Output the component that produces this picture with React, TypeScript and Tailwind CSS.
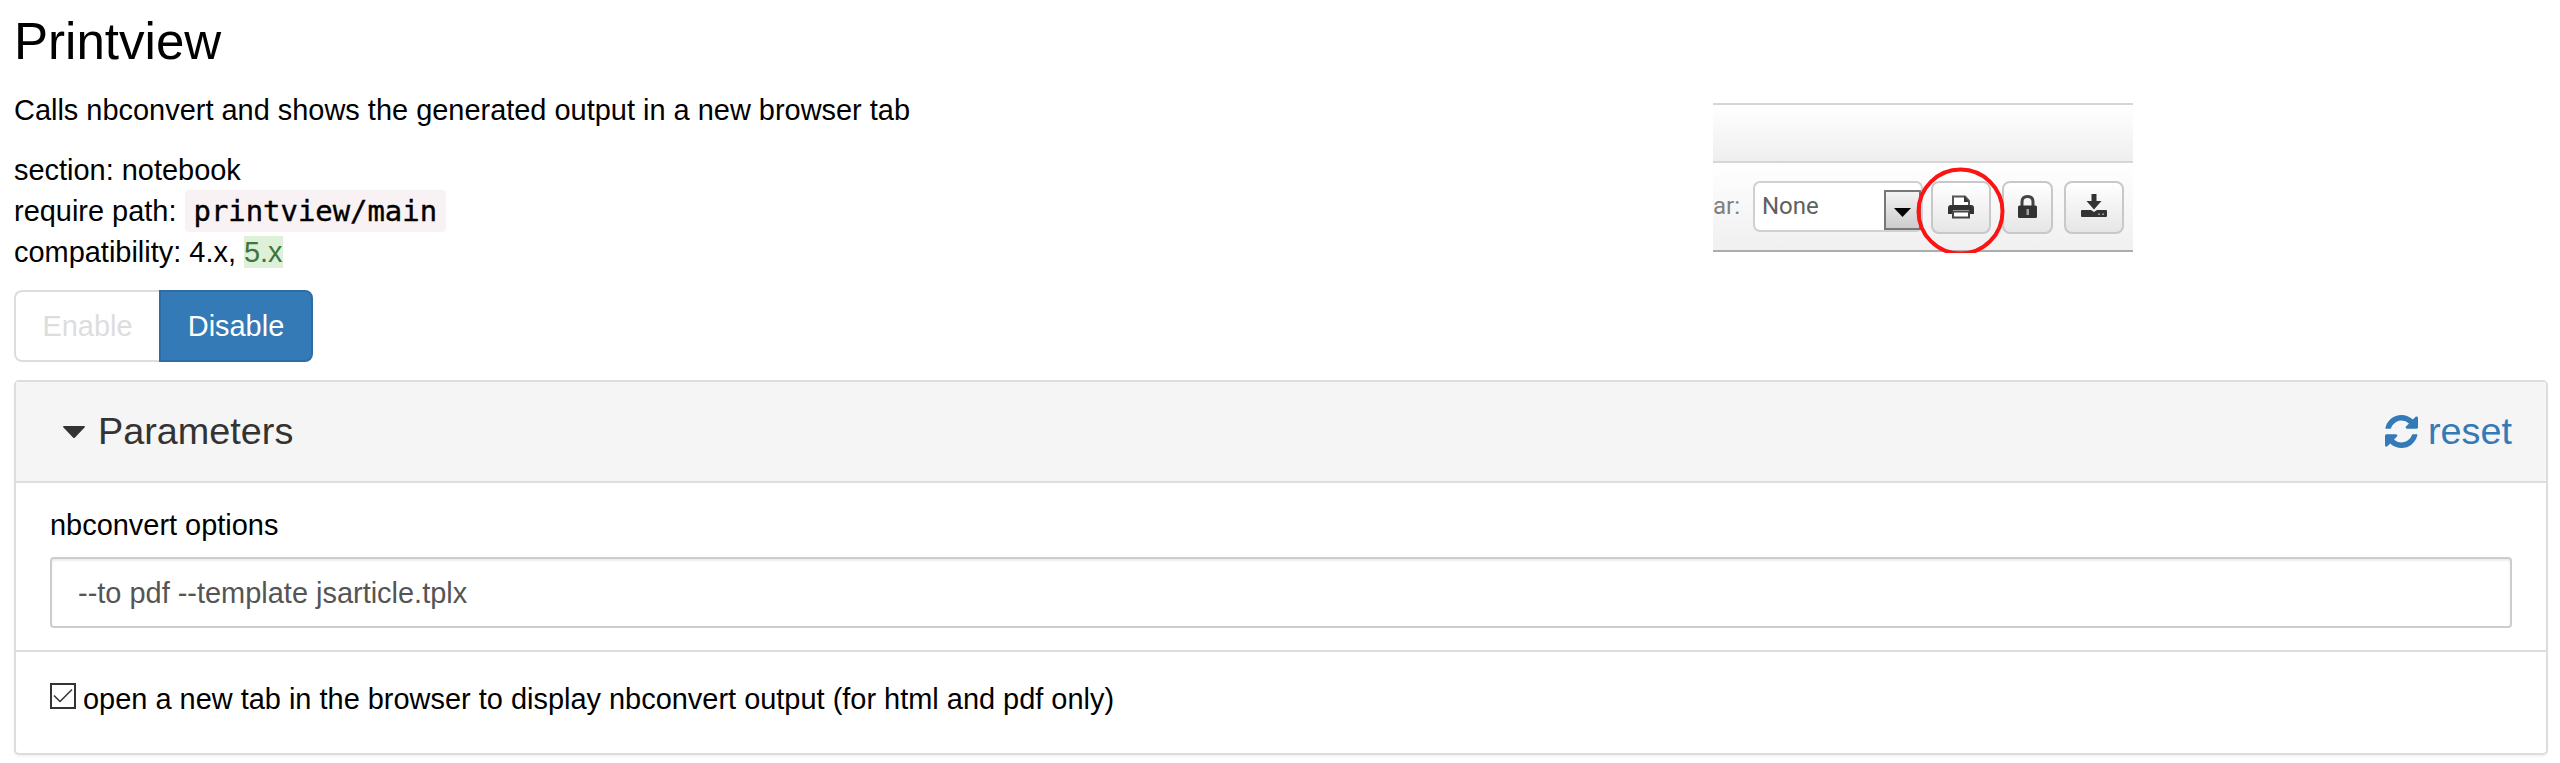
function RefreshIcon() {
  return (
    <svg className="h-[33px] w-[33px]" viewBox="0 0 1536 1536" fill="currentColor">
      <path d="M1511 928q0 5-1 7-64 268-268 434.500T764 1536q-146 0-282.500-55T238 1324l-129 129q-19 19-45 19t-45-19-19-45V960q0-26 19-45t45-19h448q26 0 45 19t19 45-19 45l-137 137q71 66 161 102t187 36q134 0 250-65t186-179q11-17 53-117 8-23 30-23h192q13 0 22.500 9.500t9.500 22.500zm25-800v448q0 26-19 45t-45 19h-448q-26 0-45-19t-19-45 19-45l138-138Q969 256 768 256q-134 0-250 65T332 500q-11 17-53 117-8 23-30 23H50q-13 0-22.500-9.500T18 608v-7q65-268 270-434.500T768 0q146 0 284 55.500T1297 212l130-129q19-19 45-19t45 19 19 45z" />
    </svg>
  );
}

function PrintIcon() {
  return (
    <svg className="h-[24px] w-[26px]" viewBox="0 0 26 24">
      <path d="M5 11V1.500h12l4 4.500v5" fill="#fff" stroke="#555" strokeWidth="2" />
      <path d="M16 1v6h5z" fill="#333" />
      <path d="M3 10h20q3 0 3 3v6h-5v-4H5v4H0v-6q0-3 3-3z" fill="#333" />
      <path d="M5 16.500h16v6H5z" fill="#fff" stroke="#444" strokeWidth="2" />
    </svg>
  );
}

function LockIcon() {
  return (
    <svg className="h-[23px] w-[19px]" viewBox="0 0 19 23">
      <path d="M4 12V7q0-5.500 5.500-5.500T15 7v5" fill="none" stroke="#444" strokeWidth="3" />
      <rect y="10.500" width="19" height="12.500" rx="1.500" fill="#333" />
      <path d="M8.500 14h2.500v6H8.500z" fill="#9aa4ac" />
    </svg>
  );
}

function DownloadIcon() {
  return (
    <svg className="h-[24px] w-[26px]" viewBox="0 0 26 24" fill="#333">
      <path d="M10.500 0h5v7h5L13 15.500 5.500 7h5zM1 16h9l3 2 3-2h9q1 0 1 1v5q0 1-1 1H1q-1 0-1-1v-5q0-1 1-1z" />
      <path d="M17 19.500h2v1.500h-2zM21 19.500h2v1.500h-2z" fill="#999" />
    </svg>
  );
}

function ToolbarPreview() {
  return (
    <div className="relative h-[150px] w-[420px] overflow-hidden">
      <div className="h-[60px] border-t-2 border-b-2 border-[#d6d6d6] bg-gradient-to-b from-white to-[#efefef]" />
      <div className="flex h-[89px] items-start border-b-2 border-[#acacac] bg-gradient-to-b from-white to-[#f0f0f0] pt-[18px] font-['Roboto',sans-serif] text-[24px] leading-[50px] text-[#808080]">
        <span className="w-[40px]">ar:</span>
        <div className="flex h-[51px] w-[170px] justify-between rounded-[7px] border-2 border-[#d0d0d0] bg-white pl-[7px] text-[#606060]">
          <span className="leading-[47px]">None</span>
          <span className="mt-[7px] flex h-[40px] w-[37px] items-center justify-center border-2 border-[#777] bg-gradient-to-b from-[#f4f4f4] to-[#ccc]">
            <svg className="mt-[4px] h-[9px] w-[17px]" viewBox="0 0 17 9"><path d="M0 0h17L8.500 9z" fill="#000" /></svg>
          </span>
        </div>
        <div className="ml-[8px] flex h-[53px] w-[60px] items-center justify-center rounded-[8px] border-2 border-[#c8c8c8] bg-gradient-to-b from-white to-[#e6e6e6] pb-[2px]"><PrintIcon /></div>
        <div className="ml-[11px] flex h-[53px] w-[51px] items-center justify-center rounded-[8px] border-2 border-[#c8c8c8] bg-gradient-to-b from-white to-[#e6e6e6] pb-[3px]"><LockIcon /></div>
        <div className="ml-[11px] flex h-[53px] w-[60px] items-center justify-center rounded-[8px] border-2 border-[#c8c8c8] bg-gradient-to-b from-white to-[#e6e6e6] pb-[4px]"><DownloadIcon /></div>
      </div>
      <svg className="absolute left-[203px] top-[64px] h-[90px] w-[90px]" viewBox="0 0 90 90"><circle cx="44.500" cy="44.500" r="42" fill="none" stroke="#fa1414" strokeWidth="4" /></svg>
    </div>
  );
}

export default function App() {
  return (
    <div className="h-[763px] w-[2560px] overflow-hidden bg-white pl-[14px] pr-[12px] font-['Liberation_Sans',Arial,sans-serif] text-[28.950px] leading-[41px] text-black">
      <div className="flex h-[380px]">
        <div className="w-[1699px]">
          <h1 className="pt-[13px] text-[51.100px] leading-[58px]">Printview</h1>
          <p className="mt-[19px]">Calls nbconvert and shows the generated output in a new browser tab</p>
          <div className="mt-[19px]">
            <div>section: notebook</div>
            <div>require path: <code className="rounded-[4px] bg-[#f9f2f4] px-[9px] py-[4px] font-['DejaVu_Sans_Mono',monospace] text-[28.900px] [-webkit-text-stroke:0.4px_#000]">printview/main</code></div>
            <div>compatibility: 4.x, <span className="bg-[#dff0d8] text-[#3c763d]">5.x</span></div>
          </div>
          <div className="mt-[17px] flex h-[72px]">
            <button className="w-[145px] rounded-l-[8px] border-2 border-r-0 border-[#ddd] text-[#ddd]">Enable</button>
            <button className="w-[154px] rounded-r-[8px] border-2 border-[#2e6da4] bg-[#337ab7] text-white">Disable</button>
          </div>
        </div>
        <div className="pt-[103px]"><ToolbarPreview /></div>
      </div>
      <section className="h-[375px] rounded-[5px] border-2 border-[#ddd] shadow-[0_2px_2px_rgba(0,0,0,0.05)]">
        <header className="flex h-[101px] items-center justify-between border-b-2 border-[#ddd] bg-[#f5f5f5] pl-[47px] pr-[34px] text-[37.800px] text-[#333]">
          <div className="flex items-center">
            <svg className="h-[12px] w-[22px]" viewBox="0 0 22 12"><path d="M1 0h20q1 0 1 1L12 11.500q-1 1-2 0L0 1q0-1 1-1z" fill="#333" /></svg>
            <span className="ml-[13px]">Parameters</span>
          </div>
          <a className="flex items-center gap-[10px] text-[#337ab7]"><RefreshIcon />reset</a>
        </header>
        <div className="h-[169px] border-b-2 border-[#ddd] px-[34px] pt-[22px]">
          <label className="block">nbconvert options</label>
          <div className="mt-[11px] flex h-[71px] items-center rounded-[4px] border-2 border-[#ccc] px-[26px] pt-[2px] text-[#555] shadow-[inset_0_2px_2px_rgba(0,0,0,0.075)]">--to pdf --template jsarticle.tplx</div>
        </div>
        <label className="flex px-[34px] pt-[27px]">
          <svg className="mt-[4px] h-[26px] w-[26px]" viewBox="0 0 26 26" fill="none" stroke="#333"><path d="M1 1h24v24H1z" strokeWidth="2" /><path d="M4 12.500l6 6L22 6.500" strokeWidth="1.500" /></svg>
          <span className="ml-[7px]">open a new tab in the browser to display nbconvert output (for html and pdf only)</span>
        </label>
      </section>
    </div>
  );
}
